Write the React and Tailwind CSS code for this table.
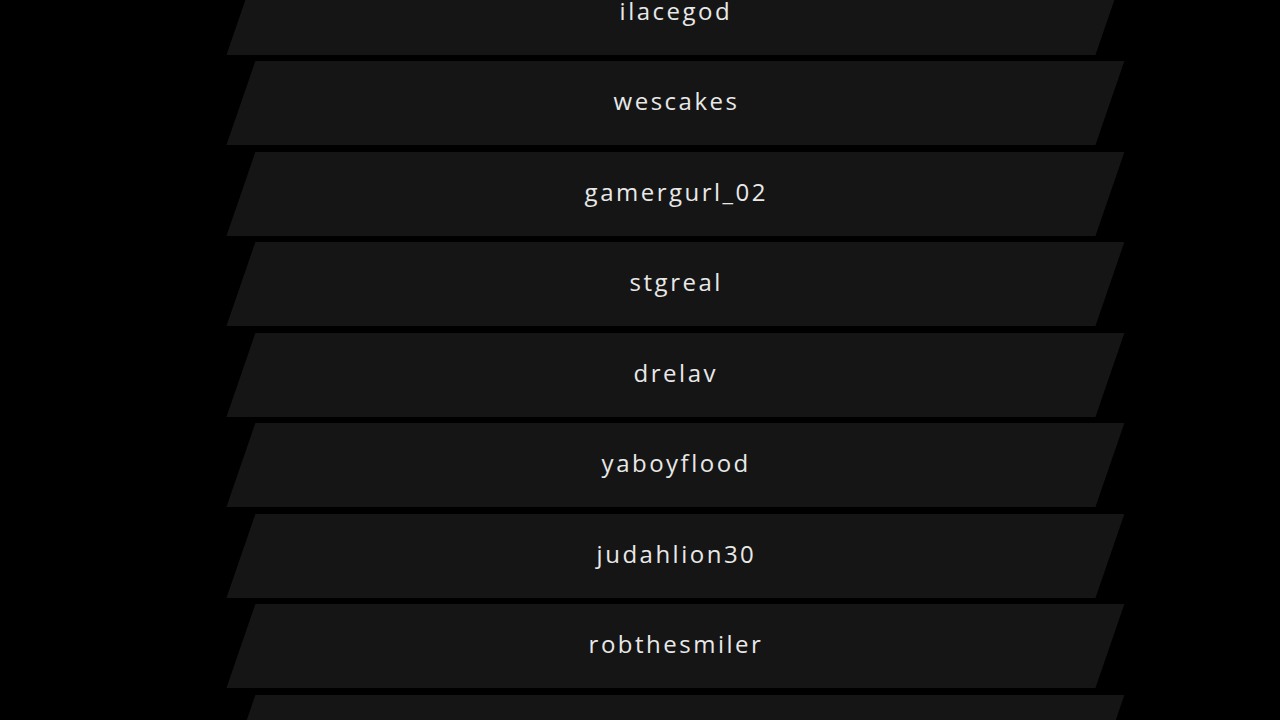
import React from "react";

const names = [
  "ilacegod",
  "wescakes",
  "gamergurl_02",
  "stgreal",
  "drelav",
  "yaboyflood",
  "judahlion30",
  "robthesmiler",
  "",
];

export default function App() {
  return (
    <div className="h-[720px] w-[1280px] overflow-hidden bg-black">
      <div className="mt-[-29.5px] flex flex-col gap-[7px] pl-[240.5px]">
        {names.map((name, i) => (
          <div
            key={i}
            className="flex h-[83.5px] w-[869px] shrink-0 -skew-x-[19deg] items-center justify-center bg-[#151515] pb-[4px]"
          >
            {name && (
              <span
                className="skew-x-[19deg] text-[24px] font-medium tracking-[2.5px] text-[#e8e8e8]"
                style={{ fontFamily: '"Open Sans", sans-serif' }}
              >
                {name}
              </span>
            )}
          </div>
        ))}
      </div>
    </div>
  );
}
